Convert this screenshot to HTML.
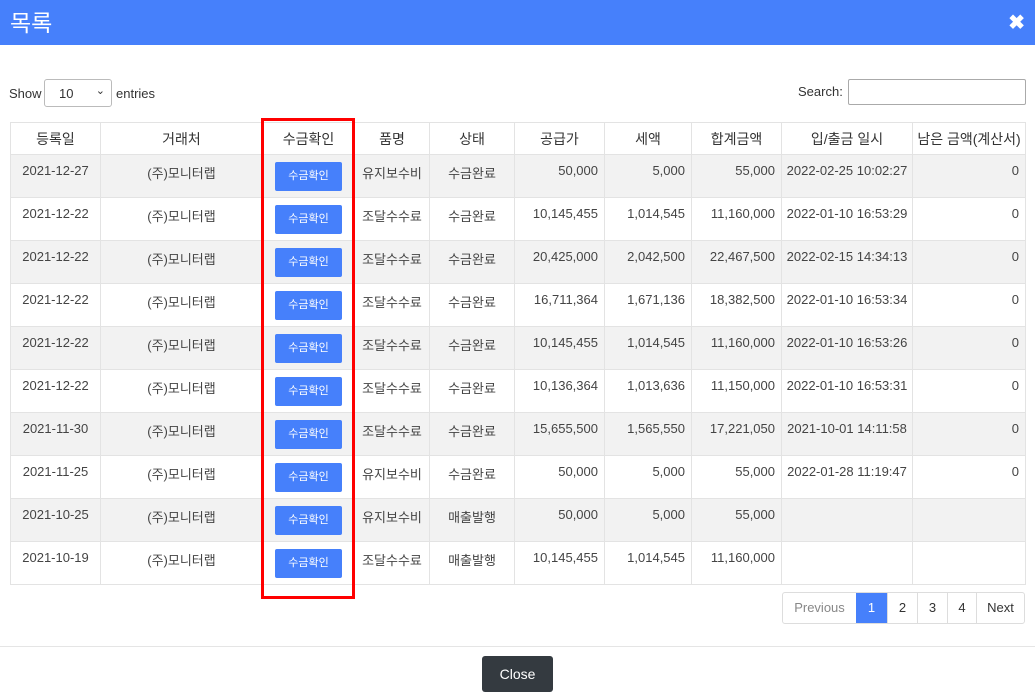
<!DOCTYPE html>
<html><head><meta charset="utf-8"><style>
*{box-sizing:border-box;margin:0;padding:0}
body{width:1035px;height:697px;overflow:hidden;background:#fff;font-family:"Liberation Sans","Noto Sans CJK KR",sans-serif;color:#333;font-size:13px;position:relative}
.hdr{position:absolute;left:0;top:0;width:1035px;height:45px;background:#4680fb;color:#fff}
.hdr .t{position:absolute;left:10px;top:4px;font-size:23px}
.hdr .x{position:absolute;right:10px;top:10px;font-size:20px;font-weight:bold}
.abs{position:absolute}
table{position:absolute;left:10px;top:122px;border-collapse:collapse;table-layout:fixed;width:1015px}
td,th{border:1px solid #e3e3e3;height:43px;vertical-align:top;padding-top:8px;font-weight:normal;font-size:13px;color:#444}
th{height:32px;padding-top:6px;color:#333;font-size:14px}
tr.g td{background:#f2f2f2}
td.c{text-align:center}td.r{text-align:right;padding-right:6px}
.btn{display:inline-block;width:67px;height:29px;background:#4680fb;color:#fff;font-size:11px;line-height:29px;border-radius:2px;text-align:center;margin-top:0}
td.b{padding-top:7px;text-align:center}
.pg{position:absolute;top:592px;left:782px;width:243px;height:32px;display:flex;border:1px solid #ddd;border-radius:3px;overflow:hidden}
.pg div{height:30px;line-height:30px;border-left:1px solid #ddd;font-size:13px;color:#333;text-align:center}
.pg div:first-child{border-left:none;color:#888}
.pg .a{background:#4680fb;color:#fff;border-left:none}
</style></head><body>
<div class="hdr"><div class="t">목록</div><div class="x">✖</div></div>
<div class="abs" style="left:9px;top:86px">Show</div>
<div class="abs" style="left:44px;top:79px;width:68px;height:28px;border:1px solid #bbb;border-radius:3px;padding:6px 14px">10<span style="position:absolute;right:6px;top:4px;font-size:11px">⌄</span></div>
<div class="abs" style="left:116px;top:86px">entries</div>
<div class="abs" style="left:798px;top:84px">Search:</div>
<div class="abs" style="left:848px;top:79px;width:178px;height:26px;border:1px solid #aaa;border-radius:2px"></div>
<table>
<colgroup><col style="width:90px"><col style="width:162px"><col style="width:92px"><col style="width:75px"><col style="width:85px"><col style="width:90px"><col style="width:87px"><col style="width:90px"><col style="width:131px"><col style="width:113px"></colgroup>
<tr><th>등록일</th><th>거래처</th><th>수금확인</th><th>품명</th><th>상태</th><th>공급가</th><th>세액</th><th>합계금액</th><th>입/출금 일시</th><th>남은 금액(계산서)</th></tr>
<tr class="g"><td class="c">2021-12-27</td><td class="c">(주)모니터랩</td><td class="b"><span class="btn">수금확인</span></td><td class="c">유지보수비</td><td class="c">수금완료</td><td class="r">50,000</td><td class="r">5,000</td><td class="r">55,000</td><td class="c">2022-02-25 10:02:27</td><td class="r">0</td></tr>
<tr><td class="c">2021-12-22</td><td class="c">(주)모니터랩</td><td class="b"><span class="btn">수금확인</span></td><td class="c">조달수수료</td><td class="c">수금완료</td><td class="r">10,145,455</td><td class="r">1,014,545</td><td class="r">11,160,000</td><td class="c">2022-01-10 16:53:29</td><td class="r">0</td></tr>
<tr class="g"><td class="c">2021-12-22</td><td class="c">(주)모니터랩</td><td class="b"><span class="btn">수금확인</span></td><td class="c">조달수수료</td><td class="c">수금완료</td><td class="r">20,425,000</td><td class="r">2,042,500</td><td class="r">22,467,500</td><td class="c">2022-02-15 14:34:13</td><td class="r">0</td></tr>
<tr><td class="c">2021-12-22</td><td class="c">(주)모니터랩</td><td class="b"><span class="btn">수금확인</span></td><td class="c">조달수수료</td><td class="c">수금완료</td><td class="r">16,711,364</td><td class="r">1,671,136</td><td class="r">18,382,500</td><td class="c">2022-01-10 16:53:34</td><td class="r">0</td></tr>
<tr class="g"><td class="c">2021-12-22</td><td class="c">(주)모니터랩</td><td class="b"><span class="btn">수금확인</span></td><td class="c">조달수수료</td><td class="c">수금완료</td><td class="r">10,145,455</td><td class="r">1,014,545</td><td class="r">11,160,000</td><td class="c">2022-01-10 16:53:26</td><td class="r">0</td></tr>
<tr><td class="c">2021-12-22</td><td class="c">(주)모니터랩</td><td class="b"><span class="btn">수금확인</span></td><td class="c">조달수수료</td><td class="c">수금완료</td><td class="r">10,136,364</td><td class="r">1,013,636</td><td class="r">11,150,000</td><td class="c">2022-01-10 16:53:31</td><td class="r">0</td></tr>
<tr class="g"><td class="c">2021-11-30</td><td class="c">(주)모니터랩</td><td class="b"><span class="btn">수금확인</span></td><td class="c">조달수수료</td><td class="c">수금완료</td><td class="r">15,655,500</td><td class="r">1,565,550</td><td class="r">17,221,050</td><td class="c">2021-10-01 14:11:58</td><td class="r">0</td></tr>
<tr><td class="c">2021-11-25</td><td class="c">(주)모니터랩</td><td class="b"><span class="btn">수금확인</span></td><td class="c">유지보수비</td><td class="c">수금완료</td><td class="r">50,000</td><td class="r">5,000</td><td class="r">55,000</td><td class="c">2022-01-28 11:19:47</td><td class="r">0</td></tr>
<tr class="g"><td class="c">2021-10-25</td><td class="c">(주)모니터랩</td><td class="b"><span class="btn">수금확인</span></td><td class="c">유지보수비</td><td class="c">매출발행</td><td class="r">50,000</td><td class="r">5,000</td><td class="r">55,000</td><td class="c"></td><td class="r"></td></tr>
<tr><td class="c">2021-10-19</td><td class="c">(주)모니터랩</td><td class="b"><span class="btn">수금확인</span></td><td class="c">조달수수료</td><td class="c">매출발행</td><td class="r">10,145,455</td><td class="r">1,014,545</td><td class="r">11,160,000</td><td class="c"></td><td class="r"></td></tr>
</table>
<div class="abs" style="left:261px;top:118px;width:94px;height:481px;border:3px solid #f00"></div>
<div class="pg"><div style="width:73px">Previous</div><div class="a" style="width:31px">1</div><div style="width:30px">2</div><div style="width:30px">3</div><div style="width:29px">4</div><div style="width:48px">Next</div></div>
<div class="abs" style="left:0;top:646px;width:1035px;height:1px;background:#e5e5e5"></div>
<div class="abs" style="left:482px;top:656px;width:71px;height:36px;background:#343a40;color:#fff;border-radius:3px;text-align:center;line-height:36px;font-size:14px">Close</div>
</body></html>
